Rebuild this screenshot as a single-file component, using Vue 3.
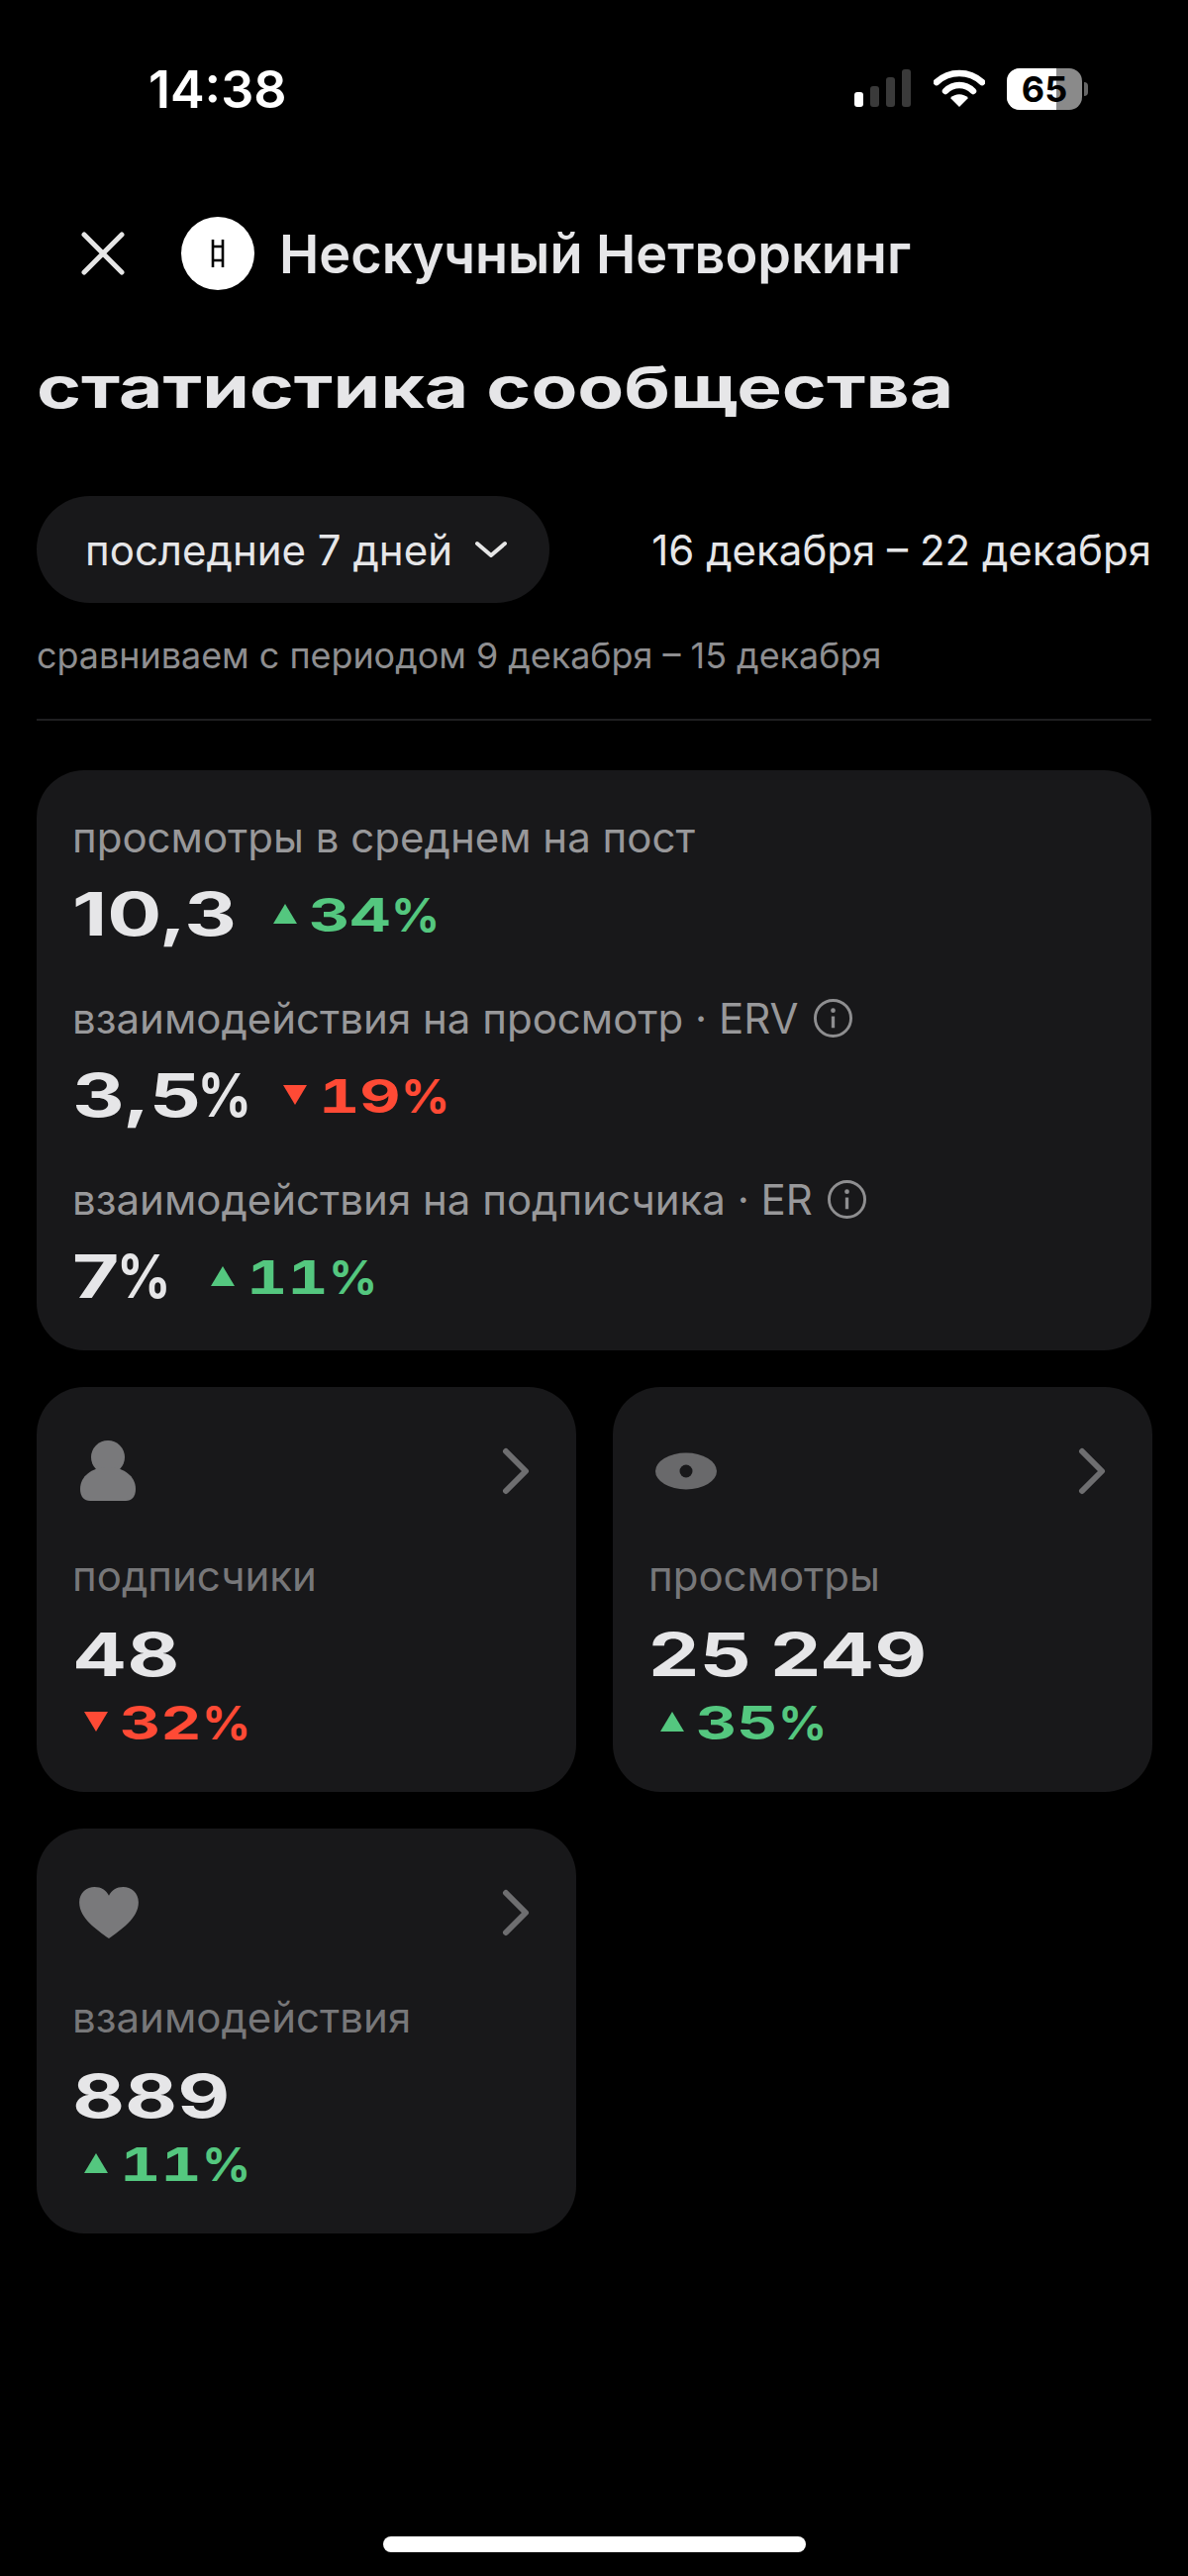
<template>
  <div class="screen">
    <div class="status">
      <span class="time">14:38</span>
      <div class="status-icons">
        <svg width="60" height="40" viewBox="0 0 60 40">
          <rect x="2" y="23" width="9" height="15" rx="3" fill="#fff" />
          <rect x="18" y="17" width="9" height="21" rx="3" fill="#3a3a3a" />
          <rect x="34" y="8" width="9" height="30" rx="3" fill="#3a3a3a" />
          <rect x="50" y="0" width="9" height="38" rx="3" fill="#3a3a3a" />
        </svg>
        <svg class="wifi" width="52" height="40" viewBox="0 0 52 40">
          <path d="M3 13 C16 1 36 1 49 13" fill="none" stroke="#fff" stroke-width="6.5" stroke-linecap="round" />
          <path d="M12 22 C20 14 32 14 40 22" fill="none" stroke="#fff" stroke-width="6.5" stroke-linecap="round" />
          <path d="M26 38 L17 29 C22 24 30 24 35 29 Z" fill="#fff" />
        </svg>
        <div class="battery">
          <div class="battery-fill"></div>
          <span class="battery-num">65</span>
        </div>
        <div class="battery-nub"></div>
      </div>
    </div>

    <div class="head">
      <svg class="close" width="46" height="46" viewBox="0 0 46 46">
        <path d="M4 4 L42 42 M42 4 L4 42" stroke="#e6e6e6" stroke-width="5" stroke-linecap="round" />
      </svg>
      <div class="avatar">
        <svg width="16" height="32" viewBox="0 0 16 32">
          <path d="M3 2 V30 M13 2 V30 M3 9 H13 M3 23 H13" stroke="#000" stroke-width="2.6" fill="none" />
        </svg>
      </div>
      <span class="name">Нескучный Нетворкинг</span>
    </div>

    <h1 class="title"><span class="wide">статистика сообщества</span></h1>

    <div class="period">
      <div class="pill">
        <span>последние 7 дней</span>
        <svg width="34" height="20" viewBox="0 0 34 20">
          <path d="M3 4 L17 16 L31 4" fill="none" stroke="#e6e6e6" stroke-width="4" stroke-linecap="round" stroke-linejoin="round" />
        </svg>
      </div>
      <span class="dates">16 декабря – 22 декабря</span>
    </div>
    <p class="compare">сравниваем с периодом 9 декабря – 15 декабря</p>
    <div class="divider"></div>

    <section class="card main">
      <div v-for="m in metrics" :key="m.label" class="metric">
        <div class="metric-label">
          <span>{{ m.label }}</span>
          <svg v-if="m.info" width="41" height="41" viewBox="0 0 42 42">
            <circle cx="21" cy="21" r="18.5" fill="none" stroke="#8e8e90" stroke-width="3" />
            <path d="M21 19 V31" stroke="#8e8e90" stroke-width="3.4" />
            <circle cx="21" cy="13" r="2.4" fill="#8e8e90" />
          </svg>
        </div>
        <div class="metric-value">
          <div class="num-box" :style="{ width: m.boxWidth + 'px' }">
            <span class="num wide">{{ m.value }}<span v-if="m.percent" class="pct">%</span></span>
          </div>
          <div class="delta" :class="m.up ? 'up' : 'down'">
            <i class="tri"></i><span class="wide">{{ m.delta }}<span class="pct">%</span></span>
          </div>
        </div>
      </div>
    </section>

    <div class="grid">
      <div v-for="t in tiles" :key="t.label" class="card tile">
        <div class="tile-top">
          <svg v-if="t.icon === 'user'" class="ic-user" width="56" height="62" viewBox="0 0 56 62">
            <circle cx="28" cy="17" r="17" fill="#79797b" />
            <path d="M0 49 C0 36 12 27 28 27 C44 27 56 36 56 49 C56 57 52 61 46 61 H10 C4 61 0 57 0 49 Z" fill="#79797b" />
          </svg>
          <svg v-else-if="t.icon === 'eye'" class="ic-eye" width="64" height="40" viewBox="0 0 64 40">
            <ellipse cx="32" cy="20" rx="31" ry="18.5" fill="#69696b" />
            <circle cx="32" cy="20" r="6.5" fill="#18181a" />
          </svg>
          <svg v-else class="ic-heart" width="62" height="54" viewBox="0 0 64 56">
            <path d="M32 55 C20 46 1 34 1 17 C1 7 9 1 17 1 C24 1 29 4 32 10 C35 4 40 1 47 1 C55 1 63 7 63 17 C63 34 44 46 32 55 Z" fill="#79797b" />
          </svg>
          <svg class="arrow" width="28" height="48" viewBox="0 0 28 48">
            <path d="M4 4 L24 24 L4 44" fill="none" stroke="#6e6e70" stroke-width="6" stroke-linecap="round" stroke-linejoin="round" />
          </svg>
        </div>
        <div class="tile-label">{{ t.label }}</div>
        <div class="tile-num"><span class="num wide">{{ t.value }}</span></div>
        <div class="delta" :class="t.up ? 'up' : 'down'">
          <i class="tri"></i><span class="wide">{{ t.delta }}<span class="pct">%</span></span>
        </div>
      </div>
    </div>

    <div class="home"></div>
  </div>
</template>

<script setup>
const metrics = [
  { label: "просмотры в среднем на пост", value: "10,3", delta: "34", up: true, boxWidth: 203 },
  { label: "взаимодействия на просмотр · ERV", value: "3,5", percent: true, delta: "19", up: false, info: true, boxWidth: 213 },
  { label: "взаимодействия на подписчика · ER", value: "7", percent: true, delta: "11", up: true, info: true, boxWidth: 140 },
];

const tiles = [
  { icon: "user", label: "подписчики", value: "48", delta: "32", up: false },
  { icon: "eye", label: "просмотры", value: "25 249", delta: "35", up: true },
  { icon: "heart", label: "взаимодействия", value: "889", delta: "11", up: true },
];
</script>

<style>
html,
body {
  background: #000;
}
</style>

<style scoped>
.screen {
  position: relative;
  width: 1200px;
  height: 2602px;
  box-sizing: border-box;
  padding: 0 37px;
  background: #000;
  color: #e6e6e8;
  font-family: Inter, "Noto Sans", sans-serif;
  overflow: hidden;
}
.status {
  display: flex;
  justify-content: space-between;
  align-items: center;
  height: 68px;
  padding: 56px 64px 0 113px;
}
.time {
  font-size: 52px;
  font-weight: 600;
  color: #fff;
}
.status-icons {
  display: flex;
  align-items: center;
}
.wifi {
  margin-left: 22px;
}
.battery {
  position: relative;
  width: 76px;
  height: 42px;
  margin-left: 22px;
  border-radius: 13px;
  background: #8a8a8a;
  overflow: hidden;
  text-align: center;
}
.battery-fill {
  position: absolute;
  left: 0;
  top: 0;
  bottom: 0;
  width: 50px;
  background: #fff;
}
.battery-num {
  position: relative;
  font-size: 36px;
  font-weight: 700;
  line-height: 42px;
  color: #000;
}
.battery-nub {
  width: 4px;
  height: 14px;
  margin-left: 2px;
  border-radius: 0 4px 4px 0;
  background: #666;
}
.head {
  display: flex;
  align-items: center;
  margin-top: 95px;
  padding-left: 44px;
}
.avatar {
  display: flex;
  align-items: center;
  justify-content: center;
  width: 74px;
  height: 74px;
  margin-left: 56px;
  border-radius: 50%;
  background: #fff;
}
.name {
  margin-left: 25px;
  font-size: 54px;
  font-weight: 600;
}
.wide {
  display: inline-block;
  white-space: nowrap;
  transform: scaleX(1.36);
  transform-origin: left center;
}
.pct {
  display: inline-block;
  margin-right: -0.2em;
  transform: scaleX(0.76);
  transform-origin: left center;
}
.num .pct {
  margin-left: -0.04em;
  margin-right: -0.28em;
  transform: scaleX(0.66);
}
.title {
  margin: 63px 0 0;
  font-size: 58px;
  font-weight: 700;
  line-height: 70px;
}
.title .wide {
  transform: scaleX(1.32);
}
.period {
  display: flex;
  align-items: center;
  justify-content: space-between;
  margin-top: 75px;
}
.pill {
  display: flex;
  align-items: center;
  gap: 22px;
  height: 108px;
  padding: 0 42px 0 49px;
  border-radius: 54px;
  background: #18181a;
  font-size: 42px;
}
.dates {
  font-size: 42px;
}
.compare {
  margin: 32px 0 0;
  font-size: 35.9px;
  line-height: 42px;
  color: #8e8e90;
}
.divider {
  height: 2px;
  margin-top: 43px;
  background: #1f1f21;
}
.card {
  background: #18181a;
  border-radius: 48px;
}
.main {
  margin-top: 50px;
  height: 586px;
  box-sizing: border-box;
  padding: 40px 36px 0;
}
.metric {
  height: 183px;
}
.metric-label {
  display: flex;
  align-items: center;
  gap: 14px;
  height: 54px;
  font-size: 42px;
  color: #98989a;
}
.metric-value {
  display: flex;
  align-items: center;
  margin-top: 16px;
  height: 70px;
}
.num {
  font-size: 60px;
  font-weight: 700;
  color: #e6e6e8;
}
.delta {
  display: flex;
  align-items: center;
  gap: 12px;
  font-size: 47px;
  font-weight: 700;
  font-variant-numeric: tabular-nums;
}
.up {
  color: #54c77f;
}
.down {
  color: #ff4a35;
}
.tri {
  width: 0;
  height: 0;
  border-left: 12px solid transparent;
  border-right: 12px solid transparent;
}
.up .tri {
  border-bottom: 20px solid #54c77f;
}
.down .tri {
  border-top: 20px solid #ff4a35;
}
.grid {
  display: grid;
  grid-template-columns: 545px 545px;
  gap: 37px;
  margin-top: 37px;
}
.tile {
  height: 409px;
  box-sizing: border-box;
  padding: 50px 36px 0 36px;
}
.tile-top {
  display: flex;
  align-items: center;
  justify-content: space-between;
  height: 70px;
}
.ic-user {
  margin-left: 8px;
}
.ic-eye,
.ic-heart {
  margin-left: 6px;
}
.arrow {
  margin-right: 11px;
}
.tile-label {
  margin-top: 44px;
  font-size: 42px;
  line-height: 54px;
  color: #777779;
}
.tile-num {
  margin-top: 19px;
  line-height: 66px;
}
.tile .delta {
  height: 56px;
  margin-top: -9px;
  padding-left: 12px;
}
.home {
  position: absolute;
  left: 387px;
  top: 2562px;
  width: 427px;
  height: 16px;
  border-radius: 8px;
  background: #fff;
}
</style>
